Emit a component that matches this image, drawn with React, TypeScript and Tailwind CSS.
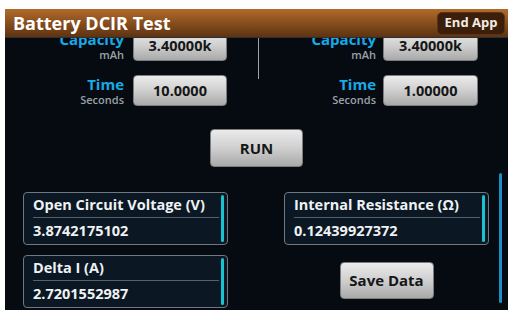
const ValueBox = ({ value, w }: { value: string; w: string }) => (
  <div
    className={`${w} h-[31px] flex items-center justify-center rounded-[4px] border border-[#7d7d7d] bg-gradient-to-b from-[#ebebeb] via-[#cfcfcf] to-[#a9a9a9] text-[14.5px] font-bold text-[#161616]`}
  >
    {value}
  </div>
);

const ParamLabel = ({ name, unit, w }: { name: string; unit: string; w: string }) => (
  <div className={`${w} flex flex-col items-end`}>
    <span className="text-[15px] font-bold text-[#19a9e6] leading-[17px]">{name}</span>
    <span className="text-[11px] font-semibold text-[#9ba1a6] leading-[13px]">{unit}</span>
  </div>
);

const ResultCard = ({ title, value }: { title: string; value: string }) => (
  <div className="w-[205px] h-[53px] flex rounded-[4px] border border-[#6d7881] bg-[#0b1722]">
    <div className="flex-1 flex flex-col pl-[9px]">
      <div className="h-[25px] flex items-center border-b border-[#56626b] text-[14.5px] font-bold text-[#eef2f4]">
        {title}
      </div>
      <div className="flex-1 flex items-center text-[14.5px] font-bold text-[#eef2f4]">{value}</div>
    </div>
    <div className="w-[3px] my-[2px] ml-[2px] mr-[3px] rounded-full bg-[#19c3cf]" />
  </div>
);

const App = () => {
  return (
    <div className="w-[516px] h-[316px] bg-white pt-[9px] pl-[5px] pr-[8px] pb-[6px]">
      <div className="w-[503px] h-[301px] flex flex-col bg-[#050b11] font-['Open_Sans',sans-serif] overflow-hidden">
        {/* Header */}
        <div className="h-[29px] shrink-0 flex items-center justify-between pl-[8px] pr-[3px] bg-gradient-to-b from-[#b26b2b] to-[#5e3311] border-b border-[#2c2f33]">
          <span className="text-[18px] font-bold text-white leading-none">Battery DCIR Test</span>
          <div className="w-[68px] h-[23px] flex items-center justify-center rounded-[5px] bg-[#3b1f0a] border border-[#5a3414] text-[13px] font-bold text-[#f3ece4]">
            End App
          </div>
        </div>

        {/* Scrolled content */}
        <div className="flex-1 relative overflow-hidden">
          <div className="mt-[-8px]">
            <div className="flex">
              <div className="w-[252px] flex flex-col gap-[14px]">
                <div className="flex items-center">
                  <ParamLabel name="Capacity" unit="mAh" w="w-[119px]" />
                  <div className="ml-[9px]">
                    <ValueBox value="3.40000k" w="w-[94px]" />
                  </div>
                </div>
                <div className="flex items-center">
                  <ParamLabel name="Time" unit="Seconds" w="w-[119px]" />
                  <div className="ml-[9px]">
                    <ValueBox value="10.0000" w="w-[94px]" />
                  </div>
                </div>
              </div>
              <div className="w-px h-[49px] bg-[#a3a3a3] ml-[1px]" />
              <div className="flex flex-col gap-[14px]">
                <div className="flex items-center">
                  <ParamLabel name="Capacity" unit="mAh" w="w-[117px]" />
                  <div className="ml-[7px]">
                    <ValueBox value="3.40000k" w="w-[95px]" />
                  </div>
                </div>
                <div className="flex items-center">
                  <ParamLabel name="Time" unit="Seconds" w="w-[117px]" />
                  <div className="ml-[7px]">
                    <ValueBox value="1.00000" w="w-[95px]" />
                  </div>
                </div>
              </div>
            </div>

            <div className="mt-[23px] flex justify-center">
              <div className="w-[93px] h-[38px] flex items-center justify-center rounded-[4px] border border-[#7d7d7d] bg-gradient-to-b from-[#ebebeb] via-[#cfcfcf] to-[#a9a9a9] text-[15px] font-bold text-[#161616]">
                RUN
              </div>
            </div>

            <div className="mt-[25px] flex">
              <div className="ml-[18px] flex flex-col gap-[10px]">
                <ResultCard title="Open Circuit Voltage (V)" value="3.8742175102" />
                <ResultCard title="Delta I (A)" value="2.7201552987" />
              </div>
              <div className="ml-[56px] flex flex-col items-center">
                <ResultCard title="Internal Resistance (Ω)" value="0.12439927372" />
                <div className="mt-[17px] w-[94px] h-[37px] flex items-center justify-center rounded-[4px] border border-[#7d7d7d] bg-gradient-to-b from-[#ebebeb] via-[#cfcfcf] to-[#a9a9a9] text-[15px] font-bold text-[#161616]">
                  Save Data
                </div>
              </div>
            </div>
          </div>

          {/* Scrollbar */}
          <div className="absolute right-[6px] top-[135px] w-[3px] h-[130px] rounded-full bg-[#1a8fc6]" />
        </div>
      </div>
    </div>
  );
};

export default App;
